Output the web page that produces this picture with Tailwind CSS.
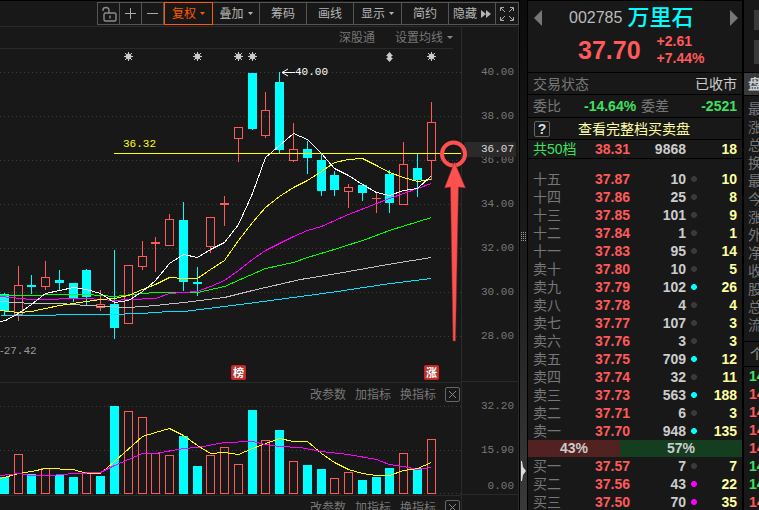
<!DOCTYPE html>
<html lang="zh-CN">
<head>
    <meta charset="UTF-8">
    <meta name="viewport" content="width=device-width, initial-scale=1.0">
    <title>万里石 002785</title>
    <script src="https://cdn.jsdelivr.net/npm/@tailwindcss/browser@4"></script>
</head>
<body class="flex h-screen overflow-hidden bg-[#181818] font-['Liberation_Sans','Noto_Sans_CJK_SC',sans-serif] text-xs text-[#777]">

    <!-- Chart side -->
    <main class="flex min-w-0 flex-1 flex-col border-r border-black">
        <nav class="flex h-[26px] shrink-0 justify-end border-t border-black pt-px text-[#b4b4b4]">
            <div class="flex h-[23px] divide-x divide-[#555] border border-[#555]">
                <button aria-label="锁定" class="flex w-[22px] items-center justify-center">
                    <svg width="16" height="16" viewBox="0 0 16 16" fill="none" stroke="#8c8c8c" stroke-width="1.400"><rect x="3" y="7" width="12" height="8" rx="1.500"/><path d="M8 7V4.500Q8 1.500 5 1.500Q2 1.500 2 4V5M9 9.500V12.500"/></svg>
                </button>
                <button aria-label="放大" class="flex w-[22px] items-center justify-center">
                    <svg width="11" height="11" stroke="#aaa"><path d="M5.500 0V11M0 5.500H11"/></svg>
                </button>
                <button aria-label="缩小" class="flex w-[22px] items-center justify-center">
                    <svg width="11" height="11" stroke="#aaa"><path d="M0 5.500H11"/></svg>
                </button>
                <button class="-my-px flex w-[49px] items-center justify-center gap-1 border border-[#ff5a00]! text-[#ff5a00]">复权
                    <svg width="5" height="3" fill="#ff5a00"><path d="M0 0H5L2.500 3Z"/></svg>
                </button>
                <button class="flex w-[47px] items-center justify-center gap-1">叠加
                    <svg width="5" height="3" fill="#b4b4b4"><path d="M0 0H5L2.500 3Z"/></svg>
                </button>
                <button class="w-[47px]">筹码</button>
                <button class="w-[47px]">画线</button>
                <button class="flex w-[48px] items-center justify-center gap-1">显示
                    <svg width="5" height="3" fill="#b4b4b4"><path d="M0 0H5L2.500 3Z"/></svg>
                </button>
                <button class="w-[47px]">简约</button>
                <button class="flex w-[47px] items-center justify-center gap-1">隐藏
                    <svg width="10" height="8" fill="#b4b4b4"><path d="M0 0L5 4L0 8ZM5 0L10 4L5 8Z"/></svg>
                </button>
                <button aria-label="全屏" class="flex w-[22px] items-center justify-center">
                    <svg width="14" height="14" fill="none" stroke="#aaa"><path d="M.5 4V.5H4M10 .5H13.500V4M13.500 10V13.500H10M4 13.500H.5V10M1 1L5 5M13 1L9 5M13 13L9 9M1 13L5 9"/></svg>
                </button>
            </div>
        </nav>

        <div class="flex min-h-0 flex-1 border-t border-[#2a2a2a]">
            <div class="flex min-w-0 flex-1 flex-col">
                <div class="mr-2 flex h-[22px] shrink-0 items-center justify-end gap-5 border-b border-[#2a2a2a]">
                    <a href="#">深股通</a>
                    <button class="flex items-center gap-1">设置均线
                        <svg width="6" height="4" fill="#888"><path d="M0 0H6L3 3Z"/></svg>
                    </button>
                </div>

                <svg id="price-chart" class="h-[333px] w-full shrink-0 overflow-visible" viewBox="0 49 461 333" preserveAspectRatio="none"></svg>

                <div class="flex h-6 shrink-0 items-center justify-end gap-[9px] border-t border-[#2a2a2a]">
                    <button>改参数</button>
                    <button>加指标</button>
                    <button>换指标</button>
                    <button aria-label="关闭" class="mr-px flex size-[15px] items-center justify-center rounded-xs border border-[#666]">
                        <svg width="7" height="7" stroke="#888"><path d="M0 0L7 7M7 0L0 7"/></svg>
                    </button>
                </div>
                <svg id="volume-chart" class="h-[89px] w-full shrink-0 overflow-visible" viewBox="0 406 461 89" preserveAspectRatio="none"></svg>
                <div class="flex h-6 shrink-0 items-center justify-end gap-[9px] border-t border-[#2a2a2a]">
                    <button>改参数</button>
                    <button>加指标</button>
                    <button>换指标</button>
                    <button aria-label="关闭" class="mr-px flex size-[15px] items-center justify-center rounded-xs border border-[#666]">
                        <svg width="7" height="7" stroke="#888"><path d="M0 0L7 7M7 0L0 7"/></svg>
                    </button>
                </div>
            </div>

            <!-- Price and volume scales -->
            <div class="relative -z-10 w-[58px] shrink-0 border-x border-[#2a2a2a] font-['Liberation_Mono',monospace] text-[11px]">
                <ul class="h-[355px] border-b border-[#2a2a2a] pt-[23px] pr-1 text-right *:h-11 *:leading-[44px]">
                    <li>40.00</li>
                    <li>38.00</li>
                    <li>36.00</li>
                    <li>34.00</li>
                    <li>32.00</li>
                    <li>30.00</li>
                    <li>28.00</li>
                </ul>
                <ul class="flex h-[113px] flex-col border-b border-[#2a2a2a] pr-1 text-right">
                    <li class="h-[46px] leading-[48px]">32.20</li>
                    <li class="h-11 leading-[44px]">15.90</li>
                    <li class="leading-7">0.00</li>
                </ul>
                <span class="absolute top-[115px] right-0.5 left-0.5 h-[15px] rounded-xs bg-[#2a2a2a] pr-0.5 text-right leading-[15px] text-[#ddd]">36.07</span>
            </div>
        </div>
    </main>

    <!-- Splitter -->
    <div class="flex w-[7px] shrink-0 flex-col items-center bg-linear-to-b from-[#0c0c0c] via-[#1c1c1c] to-[#3a3a3a] pt-[232px]">
        <svg width="5" height="9" stroke="#999"><path d="M.5 0V9M2.500 0V9M4.500 0V9" stroke-dasharray="1 1"/></svg>
        <svg class="mt-[220px]" width="5" height="20" fill="#ddd"><path d="M0 0L1 0L2 6L5 10L2 14L1 20H0Z"/></svg>
    </div>

    <!-- Order book -->
    <section class="flex w-[216px] shrink-0 flex-col border-x border-t border-black text-sm">
        <header class="h-[71px] shrink-0">
            <div class="flex h-[34px] items-center pr-1 pl-1.5">
                <button aria-label="上一只"><svg width="8" height="16" fill="#777"><path d="M8 0V16L0 8Z"/></svg></button>
                <h1 class="ml-[27px] flex items-center gap-[5px] text-base text-[#bbb]">002785 <span class="text-[22px] leading-8 font-medium text-[#00ffff]">万里石</span></h1>
                <button aria-label="下一只" class="ml-auto"><svg width="8" height="16" fill="#777"><path d="M0 0V16L8 8Z"/></svg></button>
            </div>
            <div class="flex -translate-y-0.5 items-center gap-4 pl-[50px] font-bold text-[#ff5a5a]">
                <span class="text-[25px] leading-[30px]">37.70</span>
                <span class="text-sm leading-[17px]">+2.61<br>+7.44%</span>
            </div>
        </header>
        <div class="flex h-[22px] shrink-0 items-center justify-between border-t border-black px-[5px]">
            <span>交易状态</span><span class="text-[#ccc]">已收市</span>
        </div>
        <div class="flex h-[23px] shrink-0 items-center border-t border-black px-[5px]">
            <span class="w-[51px]">委比</span>
            <b class="w-[57px] text-[#3fe060]">-14.64%</b>
            <span>委差</span>
            <b class="ml-auto text-[#3fe060]">-2521</b>
        </div>
        <div class="flex h-[22px] shrink-0 items-center border-t border-black px-1.5">
            <button aria-label="帮助" class="mr-7 flex size-4 items-center justify-center rounded-xs border border-[#666] text-sm font-bold text-[#ddd]">?</button>
            <a href="#" class="text-[#ffffa0]">查看完整档买卖盘</a>
        </div>
        <table class="w-full table-fixed border-collapse">
            <thead>
                <tr class="h-[19px] border-y border-black text-right leading-[18px]">
                    <th class="w-[62px] pl-[5px] text-left font-normal text-[#3fe060]">共50档</th>
                    <th class="w-10 text-[#ff5a5a]">38.31</th>
                    <th class="w-14 text-[#ccc]">9868</th>
                    <th class="w-4"></th>
                    <th class="pr-[5px] text-[#ffffa0]">18</th>
                </tr>
                <tr class="h-[11px]"></tr>
            </thead>
            <tbody id="asks"></tbody>
        </table>
        <div class="flex h-[17px] shrink-0 text-center font-bold leading-[17px] text-[#ccc]">
            <span class="w-[43%] bg-[#522222]">43%</span>
            <span class="flex-1 bg-[#153d20]">57%</span>
        </div>
        <table class="w-full table-fixed border-collapse">
            <tbody id="bids"></tbody>
        </table>
    </section>

    <!-- Quote details, cut off by the window edge -->
    <aside class="w-4 shrink-0 overflow-hidden border-l border-black text-sm whitespace-nowrap">
        <div class="flex h-[72px] flex-col items-end gap-2.5 pt-2.5">
            <span class="h-5 w-[5px] bg-[#3a3a3a]"></span>
            <span class="h-6 w-[5px] bg-[#3a3a3a]"></span>
        </div>
        <div class="h-[23px] border-t border-black bg-[#3a3a3a] pl-1 font-bold leading-[22px] text-[#ccc]">盘</div>
        <ul class="h-[246px] border-t border-black pt-1 pl-1 leading-[18px]">
            <li>最</li>
            <li>涨</li>
            <li>总</li>
            <li>换</li>
            <li>最</li>
            <li>今</li>
            <li>涨</li>
            <li>外</li>
            <li>净</li>
            <li>收</li>
            <li>股</li>
            <li>总</li>
            <li>流</li>
        </ul>
        <div class="h-[26px] border-y border-black pl-1.5 leading-6 text-[#999]">个</div>
        <ul class="pl-[5px] font-bold leading-[18px] text-[#ff5a5a]">
            <li class="text-[#3fe060]">14</li>
            <li>14</li>
            <li>14</li>
            <li>14</li>
            <li>14</li>
            <li class="text-[#3fe060]">14</li>
            <li class="text-[#3fe060]">14</li>
            <li>14</li>
        </ul>
    </aside>

    <script>
        const UP = '#ff5a5a';
        const DOWN = '#00ffff';

        // x, colour, high, body top, body bottom, low, volume top, volume colour
        const candles = [
            [4, DOWN, 293, 294, 311, 315, 477], [18, UP, 266, 285, 315, 321, 454],
            [31, DOWN, 275, 285, 287, 294, 474], [45, UP, 261, 277, 287, 290, 468],
            [59, DOWN, 270, 280, 283, 290, 475], [73, DOWN, 283, 283, 299, 302, 477],
            [86, DOWN, 269, 270, 297, 305, 472, UP], [100, UP, 290, 304, 308, 311, 476, DOWN],
            [114, DOWN, 250, 304, 328, 339, 406], [128, UP, 265, 265, 324, 324, 411],
            [142, UP, 241, 256, 267, 270, 417], [155, UP, 237, 242, 244, 272, 453],
            [169, UP, 214, 219, 246, 246, 455], [183, DOWN, 202, 220, 282, 291, 436],
            [197, DOWN, 267, 282, 284, 296, 466], [210, UP, 217, 217, 247, 253, 455],
            [224, UP, 196, 203, 205, 226, 447], [238, UP, 127, 127, 139, 162, 464],
            [252, DOWN, 73, 73, 129, 130, 410], [265, UP, 92, 110, 136, 138, 440],
            [279, DOWN, 72, 82, 150, 153, 430], [293, UP, 123, 149, 161, 162, 461],
            [307, DOWN, 141, 149, 158, 174, 465], [321, DOWN, 153, 160, 191, 196, 469],
            [334, DOWN, 171, 175, 190, 196, 478, UP], [348, UP, 184, 187, 192, 208, 472],
            [362, DOWN, 184, 185, 193, 201, 480], [376, UP, 192, 198, 199, 213, 477, DOWN],
            [389, DOWN, 170, 174, 203, 213, 468], [403, UP, 142, 164, 205, 205, 453],
            [417, DOWN, 153, 168, 180, 197, 468], [431, UP, 102, 122, 161, 180, 439]
        ];

        // Moving averages
        const averages = [
            ['#00e5ff', '0,315 50,315 62,314 110,314 140,313 169,311 183,311 240,304 300,296 337,291 383,284 431,278'],
            ['#c0c0c0', '0,301 31,303 60,303 86,305 128,307 155,305 183,302 224,297 252,290 300,279 337,273 393,263 431,257'],
            ['#00ff00', '0,295 86,294 114,296 142,293 155,292 197,292 224,286 265,268 293,262 307,257 337,248 365,239 389,230 431,217'],
            ['#ff00ff', '0,296 31,299 86,298 114,300 128,299 155,298 169,293 183,292 197,291 210,286 224,280 238,270 252,259 265,250 279,243 293,236 307,230 321,226 348,214 389,198 431,183'],
            ['#ffff00', '0,310 18,312 31,311 59,305 86,301 100,299 114,298 128,295 142,289 155,284 169,277 183,278 197,278 210,269 224,260 238,240 252,222 265,207 279,196 293,187 307,180 321,171 334,162 348,159 362,158 376,165 389,172 403,177 417,181 431,179'],
            ['#ffffff', '0,321 5,320 18,313 31,304 45,293 59,290 73,287 86,289 100,293 114,302 128,300 142,291 155,280 169,263 183,254 197,257 210,249 224,242 238,224 252,193 265,157 279,145 293,133 307,139 321,153 334,168 348,175 362,184 376,192 389,195 403,190 417,188 431,175']
        ];
        const volumeAverages = [
            ['#ffff00', '0,478 18,473 31,471 45,468 73,469 86,473 100,473 114,461 142,436 155,432 169,428 183,435 197,445 210,453 224,452 238,454 252,448 279,438 293,441 307,441 321,453 334,462 348,469 362,473 376,475 389,475 403,470 417,468 431,462'],
            ['#ff00ff', '0,475 18,473 31,475 50,475 73,473 100,472 114,465 142,453 155,453 183,448 197,447 224,442 252,441 265,444 279,446 300,447 321,451 348,454 376,459 389,464 403,466 417,469 431,467']
        ];

        const grid = y => `<path d="M0 ${y + .5}H463" stroke="#3c3c3c" stroke-dasharray="1 3"/>`;
        const line = ([color, points]) => `<polyline points="${points}" fill="none" stroke="${color}" shape-rendering="crispEdges" transform="translate(.5 .5)"/>`;

        // Hollow box for a rise, solid box for a fall
        function box(x, color, top, bottom) {
            const h = bottom - top;
            return color === UP && h > 2
                ? `<rect x="${x - 3.5}" y="${top + .5}" width="8" height="${h - 1}" fill="none" stroke="${UP}"/>`
                : `<rect x="${x - 4}" y="${top}" width="9" height="${h}" fill="${color}"/>`;
        }

        function star(x) {
            return `<g transform="translate(${x + .5} 56.500)" stroke="#ccc"><circle r="2.500" fill="#ccc"/><path d="M0 -4.500V4.500M-4.500 0H4.500M-3.500 -3.500L3.500 3.500M3.500 -3.500L-3.500 3.500"/></g>`;
        }

        function badge(x, text) {
            return `<rect x="${x + .5}" y="365.500" width="14" height="14" rx="1" fill="#a83c3c" stroke="#f01010"/>
                <text x="${x + 7.5}" y="377" font-size="11" font-weight="bold" text-anchor="middle" fill="#fff">${text}</text>`;
        }

        document.getElementById('price-chart').innerHTML =
            [72, 116, 160, 204, 248, 292, 336].map(grid).join('') +
            candles.map(([x, color, high, top, bottom, low]) =>
                `<path d="M${x + .5} ${high}V${top}M${x + .5} ${bottom}V${low}" stroke="${color}"/>` + box(x, color, top, bottom)
            ).join('') +
            averages.map(line).join('') +
            [128, 197, 238, 252, 431].map(star).join('') +
            `<path d="M389.500 52L393 56H391.500V58H393L389.500 62L386 58H387.500V56H386Z" fill="#ccc"/>
            <path d="M114 153.500H461" stroke="#ffff00" shape-rendering="crispEdges"/>
            <g font-family="Liberation Mono" font-size="11">
                <text x="123" y="147" fill="#ffff00">36.32</text>
                <text x="295" y="75" fill="#fff">40.00</text>
                <text x="0" y="354" fill="#999"><tspan font-family="Liberation Sans">-</tspan>27.42</text>
            </g>
            <path d="M295 72.500H282M288 69L282 72.500L288 76" fill="none" stroke="#fff"/>` +
            badge(231, '榜') + badge(424, '涨') +
            `<circle cx="453.500" cy="154" r="11.500" fill="none" stroke="#ff5050" stroke-width="4"/>
            <path d="M454.500 162L465.500 188L458.500 187L455.500 341H453L450.500 187L444.500 188Z" fill="#ff5050" stroke="#7a2c2c" stroke-width=".5"/>`;

        document.getElementById('volume-chart').innerHTML =
            [406, 450, 493].map(grid).join('') +
            candles.map(c => box(c[0], c[7] || c[1], c[6], 494)).join('') +
            volumeAverages.map(line).join('');

        // --- Order book: level, price, volume, orders, marker ---
        const asks = [
            ['十五', '37.87', 10, 10], ['十四', '37.86', 25, 8], ['十三', '37.85', 101, 9],
            ['十二', '37.84', 1, 1], ['十一', '37.83', 95, 14], ['卖十', '37.80', 10, 5],
            ['卖九', '37.79', 102, 26, DOWN], ['卖八', '37.78', 4, 4], ['卖七', '37.77', 107, 3],
            ['卖六', '37.76', 3, 3], ['卖五', '37.75', 709, 12, DOWN], ['卖四', '37.74', 32, 11],
            ['卖三', '37.73', 563, 188, DOWN], ['卖二', '37.71', 6, 3], ['卖一', '37.70', 948, 135, DOWN]
        ];
        const bids = [
            ['买一', '37.57', 7, 7], ['买二', '37.56', 43, 22, '#ff00ff'], ['买三', '37.50', 70, 35, '#ff00ff']
        ];
        const row = ([level, price, volume, orders, marker = '#3a3a3a']) => `
            <tr class="h-[18px] text-right font-bold leading-[18px]">
                <th class="w-[62px] pl-[5px] text-left font-normal">${level}</th>
                <td class="w-10 text-[#ff5a5a]">${price}</td>
                <td class="w-14 text-[#ccc]">${volume}</td>
                <td class="w-4"><svg class="mx-auto" width="6" height="6" fill="${marker}"><path d="M2 0H4L6 2V4L4 6H2L0 4V2Z"/></svg></td>
                <td class="pr-[5px] text-[#ffffa0]">${orders}</td>
            </tr>`;
        document.getElementById('asks').innerHTML = asks.map(row).join('');
        document.getElementById('bids').innerHTML = bids.map(row).join('');
    </script>

</body>
</html>
